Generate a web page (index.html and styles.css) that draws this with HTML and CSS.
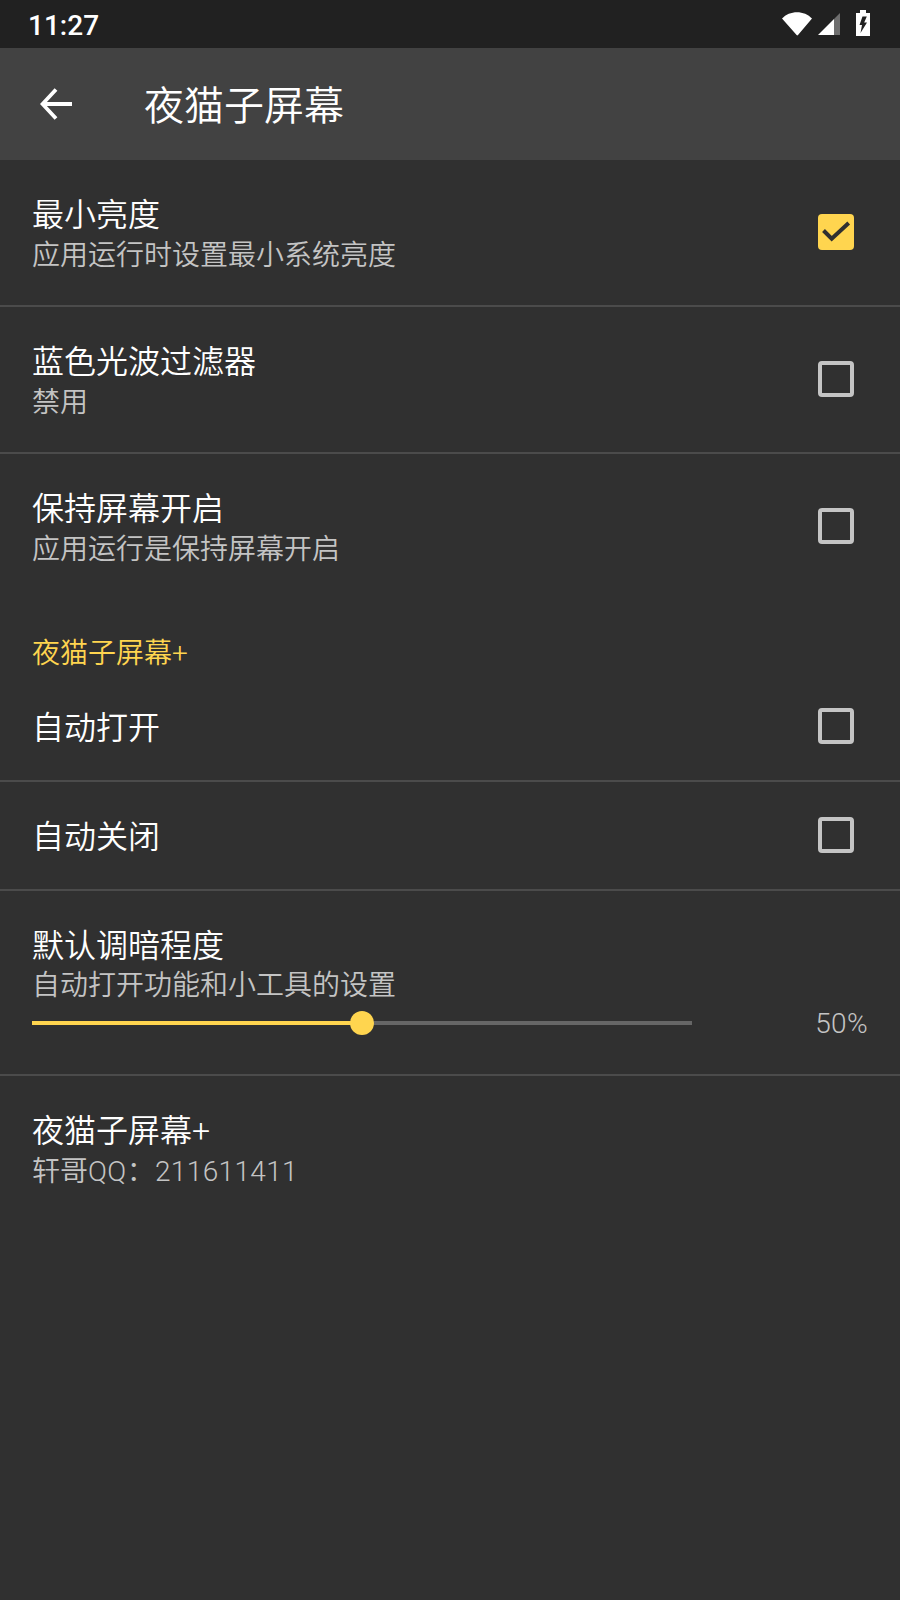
FILE: index.html
```html
<!DOCTYPE html>
<html lang="zh-CN">
<head>
    <meta charset="UTF-8">
    <meta name="viewport" content="width=device-width, initial-scale=1.0">
    <title>夜猫子屏幕</title>
    <link rel="stylesheet" href="styles.css">
</head>
<body>
    <div class="status-bar">
        <span class="clock">11:27</span>
        <div class="status-icons">
            <svg width="30" height="24" viewBox="0 0 30 24"><path d="M0 6.5 C7.5 -2 22.5 -2 30 6.5 L16 23 Q15.3 23.8 14.6 23 Z" fill="#fff"/></svg>
            <svg width="22" height="22" viewBox="0 0 22 22"><path d="M16 6 L22 0 V22 H16 Z" fill="#6e6e6e"/><path d="M0 22 L16 6 V22 Z" fill="#fff"/></svg>
            <svg class="icon-battery" width="14" height="26" viewBox="0 0 14 26"><path d="M4 0 H10 V3 H14 V26 H0 V3 H4 Z" fill="#fff"/><path d="M6.5 6.5 L3.5 15 H6 L4.5 23 L11 12.5 H8.2 L10.8 6.5 Z" fill="#212121"/></svg>
        </div>
    </div>

    <header class="toolbar">
        <svg width="32" height="32" viewBox="0 0 32 32"><path d="M32 16 H3 M16 1.5 L2.5 16 L16 30.5" fill="none" stroke="#fff" stroke-width="3.8"/></svg>
        <h1>夜猫子屏幕</h1>
    </header>

    <main>
        <div class="pref divided">
            <div class="pref-text">
                <div class="pref-title">最小亮度</div>
                <div class="pref-sub">应用运行时设置最小系统亮度</div>
            </div>
            <span class="check checked">
                <svg width="36" height="36" viewBox="0 0 36 36"><path d="M5.5 16.5 L13.7 24.7 L30.7 9" fill="none" stroke="#303030" stroke-width="4"/></svg>
            </span>
        </div>
        <div class="pref divided">
            <div class="pref-text">
                <div class="pref-title">蓝色光波过滤器</div>
                <div class="pref-sub">禁用</div>
            </div>
            <span class="check"></span>
        </div>
        <div class="pref">
            <div class="pref-text">
                <div class="pref-title">保持屏幕开启</div>
                <div class="pref-sub">应用运行是保持屏幕开启</div>
            </div>
            <span class="check"></span>
        </div>

        <div class="section-head">夜猫子屏幕+</div>

        <div class="pref pref-single first-single divided">
            <div class="pref-title">自动打开</div>
            <span class="check"></span>
        </div>
        <div class="pref pref-single divided">
            <div class="pref-title">自动关闭</div>
            <span class="check"></span>
        </div>

        <div class="pref-slider divided">
            <div class="pref-title">默认调暗程度</div>
            <div class="pref-sub slider-sub">自动打开功能和小工具的设置</div>
            <div class="slider-row">
                <div class="slider">
                    <div class="slider-fill" style="width: 50%"></div>
                    <div class="slider-thumb" style="left: 50%"></div>
                </div>
                <span class="slider-value">50%</span>
            </div>
        </div>

        <div class="pref">
            <div class="pref-text">
                <div class="pref-title">夜猫子屏幕+</div>
                <div class="pref-sub">轩哥<span class="latin">QQ：211611411</span></div>
            </div>
        </div>
    </main>
</body>
</html>
```

FILE: styles.css
```css
* {
    box-sizing: border-box;
}
body {
    margin: 0;
    height: 1600px;
    overflow: hidden;
    background-color: #303030;
    color: #fff;
    font-family: Roboto, "Noto Sans CJK SC", sans-serif;
}
.status-bar {
    height: 48px;
    background-color: #212121;
    display: flex;
    align-items: center;
    justify-content: space-between;
    padding: 0 30px 0 28px;
}
.clock {
    font-size: 28px;
    font-weight: 500;
    margin-top: 2px;
}
.status-icons {
    display: flex;
    align-items: center;
    gap: 6px;
}
.status-icons svg {
    display: block;
}
.icon-battery {
    margin-left: 10px;
    margin-bottom: 2px;
}
.toolbar {
    height: 112px;
    background-color: #424242;
    display: flex;
    align-items: center;
    padding-left: 40px;
}
.toolbar svg {
    display: block;
}
.toolbar h1 {
    margin: 0 0 2px 72px;
    font-size: 40px;
    font-weight: 350;
}
.pref {
    display: flex;
    align-items: center;
    justify-content: space-between;
    padding: 29px 46px 29px 32px;
}
.pref-text {
    padding-top: 5px;
}
.pref-title {
    font-size: 32px;
    line-height: 42px;
    font-weight: 350;
}
.pref-sub {
    font-size: 28px;
    line-height: 40px;
    font-weight: 350;
    color: #c4c4c4;
}
.latin {
    letter-spacing: 0.35px;
}
.divided {
    border-bottom: 2px solid #4b4b4b;
}
.check {
    width: 36px;
    height: 36px;
    margin-bottom: 1px;
    border: 4px solid #c4c4c4;
    border-radius: 4px;
    flex-shrink: 0;
}
.check.checked {
    border: none;
    background-color: #ffd54f;
}
.check svg {
    display: block;
}
.section-head {
    padding: 35px 32px 0;
    font-size: 28px;
    line-height: 40px;
    font-weight: 350;
    color: #ffd54f;
}
.pref-single {
    height: 109px;
    padding-top: 0;
    padding-bottom: 0;
}
.pref-single .pref-title {
    padding-top: 2px;
}
.first-single {
    height: 108px;
    padding-bottom: 2px;
}
.first-single .pref-title {
    padding-top: 4px;
}
.pref-slider {
    height: 185px;
    padding: 34px 32px 0;
}
.slider-sub {
    margin-top: -1px;
}
.slider-row {
    display: flex;
    align-items: center;
    height: 40px;
    margin-top: -2px;
}
.slider {
    position: relative;
    width: 660px;
    height: 4px;
    margin-bottom: 2px;
    background-color: #666;
}
.slider-fill {
    height: 4px;
    background-color: #ffd54f;
}
.slider-thumb {
    position: absolute;
    top: -10px;
    width: 24px;
    height: 24px;
    margin-left: -12px;
    border-radius: 50%;
    background-color: #ffd54f;
}
.slider-value {
    margin-left: auto;
    font-size: 28px;
    line-height: 40px;
    font-weight: 300;
    letter-spacing: 0.35px;
    color: #c4c4c4;
}
```
